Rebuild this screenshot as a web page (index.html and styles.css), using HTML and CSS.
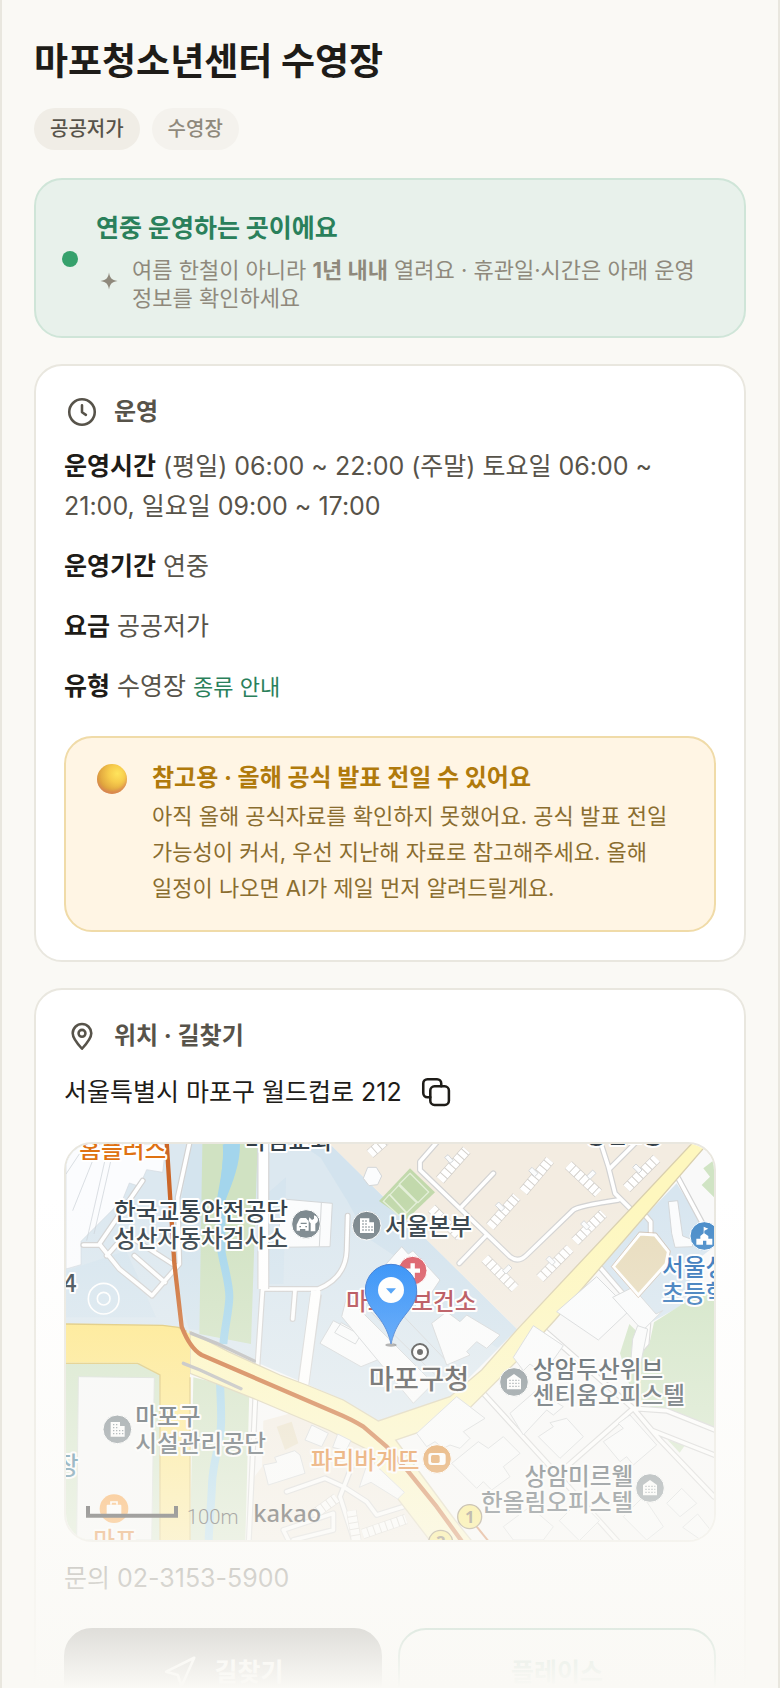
FILE: index.html
```
<!DOCTYPE html>
<html lang="ko">
<head>
	<title>마포청소년센터 수영장</title>
	<meta name="viewport" content="width=device-width, initial-scale=1">
	<meta charset="UTF-8">
	<link rel="stylesheet" href="styles.css">
</head>
<body>

<main class="page">

	<h1 class="title">마포청소년센터 수영장</h1>

	<div class="chips">
		<span class="chip chip-price">공공저가</span>
		<span class="chip">수영장</span>
	</div>

	<section class="status">
		<span class="status-dot"></span>
		<div class="status-body">
			<h2 class="status-title">연중 운영하는 곳이에요</h2>
			<div class="status-note">
				<svg class="sparkle" viewBox="0 0 26 26" aria-hidden="true"><path d="M13 4.500c1 5.500 2.500 7.500 8.500 8.500-6 1-7.500 3-8.500 8.500-1-5.500-2.500-7.500-8.500-8.500 6-1 7.500-3 8.500-8.500z"/></svg>
				<p>여름 한철이 아니라 <b>1년 내내</b> 열려요 · 휴관일·시간은 아래 운영 정보를 확인하세요</p>
			</div>
		</div>
	</section>

	<section class="card">
		<h2 class="card-title">
			<svg class="icon" viewBox="0 0 24 24" aria-hidden="true"><circle cx="12" cy="12" r="8.500"/><path d="M12 7.500v4.700l2.600 1.700"/></svg>
			운영
		</h2>
		<p class="row"><b>운영시간</b> (평일) 06:00 ~ 22:00 (주말) 토요일 06:00 ~ 21:00, 일요일 09:00 ~ 17:00</p>
		<p class="row"><b>운영기간</b> 연중</p>
		<p class="row"><b>요금</b> 공공저가</p>
		<p class="row"><b>유형</b> 수영장 <a class="guide" href="#guide">종류 안내</a></p>

		<div class="notice">
			<span class="orb"></span>
			<div class="notice-body">
				<h3 class="notice-title">참고용 · 올해 공식 발표 전일 수 있어요</h3>
				<p>아직 올해 공식자료를 확인하지 못했어요. 공식 발표 전일 가능성이 커서, 우선 지난해 자료로 참고해주세요. 올해 일정이 나오면 AI가 제일 먼저 알려드릴게요.</p>
			</div>
		</div>
	</section>

	<section class="card">
		<h2 class="card-title">
			<svg class="icon" viewBox="0 0 24 24" aria-hidden="true"><path d="M12 20.500c4-4.300 6.200-7.200 6.200-10.300a6.200 6.200 0 0 0-12.400 0c0 3.100 2.200 6 6.200 10.300z"/><circle cx="12" cy="10.200" r="2.300"/></svg>
			위치 · 길찾기
		</h2>
		<div class="address">
			<span>서울특별시 마포구 월드컵로 212</span>
			<button class="copy" type="button" aria-label="주소 복사">
				<svg class="icon" viewBox="0 0 24 24" aria-hidden="true"><rect x="8.200" y="8.200" width="12.400" height="12.400" rx="2.800"/><path d="M8.200 15.500H6.300a2.800 2.800 0 0 1-2.800-2.800V6.300a2.800 2.800 0 0 1 2.800-2.800h6.400a2.800 2.800 0 0 1 2.800 2.800v1.900"/></svg>
			</button>
		</div>

		<div class="map">
			<svg class="map-svg" viewBox="0 0 1944 1188">
				<defs>
					<linearGradient id="pin" x1="0" y1="0" x2="0" y2="1">
						<stop offset="0" stop-color="#2288f8"/>
						<stop offset="1" stop-color="#2f8efa"/>
					</linearGradient>
					<g id="office">
						<circle class="poi" r="43"/>
						<path fill="#fff" d="M-20-22H8v12h14v32h-42z"/>
						<path class="windows" d="M-13-14H4M-13-5H4M-13 4H18M-13 13H18"/>
					</g>
					<g id="home">
						<circle class="poi" r="43"/>
						<path fill="#fff" d="M0-24l21 15v31h-42V-9z"/>
						<path class="windows" d="M-14-5H16M-14 4H16M-14 13H16"/>
					</g>
				</defs>

				<!-- ground -->
				<rect width="1944" height="1188" fill="#f9f9f9"/>
				<path fill="#dce8f0" d="M0 0h792l562 556-202 202-215 73-105-63-462-200L0 545z"/>
				<path fill="#cfe1ed" d="M792 0l562 556-60 55-190-120-110-150-90-60-60-110-80-130-60-41z" opacity=".7"/>
				<path fill="#cfe1ed" d="M372 0h37v560l-40-5-30-90 8-300z" opacity=".6"/>
				<path fill="#cfe1ed" d="M592 160l68-60-8 320h-60zM0 380l180-60 90 200H0z" opacity=".5"/>
				<path fill="#fbfcfe" stroke="#d3dae0" stroke-width="2" d="M0 0h300l-10 85-48-8-22 50-30-10-20 50-125 125v70L0 375z"/>
				<path fill="none" stroke="#c8ced4" stroke-width="2" d="M128 0L62 290M146 0L84 270M60 0L0 90M100 0L20 200"/>
				<path fill="#f3ece1" d="M792 0l562 556L1896 0z"/>
				<path fill="#d0e2c2" d="M409 0h166l-20 600-155-30zM382 700l168 40-12 448H372z"/>
				<path fill="none" stroke="#a3d5ec" stroke-width="24" d="M482 0c6 60-8 110-16 160v160c8 50 25 100 24 140s-14 90-18 140M462 715c2 60 6 100 2 145s-24 100-26 160 -8 110-10 168"/>
				<path fill="#a3d5ec" d="M475 0h47c0 60-20 110-44 170l-18-10z"/>
				<path fill="#d3e5c8" d="M0 656h282v532H0z"/>
				<path fill="#f8f9f9" stroke="#d6dcd6" stroke-width="3" d="M37 698l228 3-8 487H32z"/>
				<path fill="#f3ece1" d="M592 830l110-30 210 108 195 280H548l10-180 30-40z"/>
				<path fill="#d8e6f0" d="M1832 118l-232 240 150 180 110-60 20-120 64-50v-60l-50-30z"/>
				<path fill="#d0e4c4" d="M1944 48l-32 25 20 25-25 25 37 37zM1944 420l-180 115-14 65-60-60-28 88 40 135 60 30 182 60zM1805 888l52 16-16 22z"/>

				<!-- small streets -->
				<g class="street-edge">
					<path d="M592-10v445M592 400l-24 360-20 440"/>
					<path d="M592 435h165l-47 290M757 435q82-34 85-115l3-105M687 440l-7 85"/>
					<path d="M372-10l-37 170 5 200-82 95-36-30-62-50-60-75 130-190M205 335l92 80M122 335l58-65 140 90M52 303h48"/>
					<path d="M1117-10l-55 63v25l270 260q25 20 50-5l140-135q15-12 135-30M1602-10l25 78 20 80 70 70M1632 73l80-80M1187 188l95-100M1262 273l-82 85"/>
					<path d="M1837 103l75 140M1732 208l22 25v37M1592 358l155 180-5 60-60 70M1422 548l280 245 80 95 162 170M1252 748l230 252 180 200M1702 793l-200 175M1702 793l100 7 150 60M1760 860l190 75"/>
					<path d="M662 1043l115-40 55 25 70 45 30 40 80-25M857 968l-35 90 45 140M652 1158l150-50v50l-120 30M652 1158l20 40"/>
				</g>
				<g class="street">
					<path d="M592-10v445M592 400l-24 360-20 440"/>
					<path d="M592 435h165l-47 290M757 435q82-34 85-115l3-105M687 440l-7 85"/>
					<path d="M372-10l-37 170 5 200-82 95-36-30-62-50-60-75 130-190M205 335l92 80M122 335l58-65 140 90M52 303h48"/>
					<path d="M1117-10l-55 63v25l270 260q25 20 50-5l140-135q15-12 135-30M1602-10l25 78 20 80 70 70M1632 73l80-80M1187 188l95-100M1262 273l-82 85"/>
					<path d="M1837 103l75 140M1732 208l22 25v37M1592 358l155 180-5 60-60 70M1422 548l280 245 80 95 162 170M1252 748l230 252 180 200M1702 793l-200 175M1702 793l100 7 150 60M1760 860l190 75"/>
					<path d="M662 1043l115-40 55 25 70 45 30 40 80-25M857 968l-35 90 45 140M652 1158l150-50v50l-120 30M652 1158l20 40"/>
				</g>
				<path stroke="#d5d5d5" stroke-width="36" fill="none" d="M592-10v445M750 450l-38 270"/>
				<path stroke="#fff" stroke-width="29" fill="none" d="M592-10v445M750 440l-38 285"/>

				<!-- main roads -->
				<path fill="#fef7be" stroke="#d9cfae" stroke-width="4" d="M1881-5L1354 556l-107 122-95 80-215 73-105-63-110-45-80-30-155-70-115-60v125l190 75 225 95 120 60 30 70 165 215h125l-60-75-178-240 190-64 195-194 93-102L1928-5z"/>
				<path fill="#ffe783" d="M0 540l290 4 47 6 35 20v620h-90V693l-65-37H0z"/>
				<path fill="none" stroke="#dcc268" stroke-width="4" d="M0 540l290 4 47 6 25 12M0 658h215l67 35v495M372 700v488"/>
				<path fill="none" stroke="#b5b5b5" stroke-width="10" stroke-linecap="round" d="M376 568l76 30 113 53M352 658l50 20 123 56"/>
				<path fill="none" stroke="#cb6628" stroke-width="13" stroke-linejoin="round" d="M302-5l23 363 22 190q25 65 60 85l395 170q60 25 90 45l70 60 65 75 85 105 80 110"/>
				<path fill="none" stroke="#cb6628" stroke-width="6" d="M1232 1148l34 42"/>

				<!-- buildings -->
				<g class="blocks-edge">
					<path d="M1122 108l80-90M1372 143l80-95M1272 248l80-90M1507 63l90 85M1682 133l90-90M1527 293l85-85M1422 403l90-90M1257 343l90 90M912 30l45-40M1097 193l85 85"/>
				</g>
				<g class="blocks">
					<path d="M1122 108l80-90M1372 143l80-95M1272 248l80-90M1507 63l90 85M1682 133l90-90M1527 293l85-85M1422 403l90-90M1257 343l90 90M912 30l45-40M1097 193l85 85"/>
				</g>
				<g class="building">
					<path d="M1136 40l10-8 16 18-10 8zM1388 80l10-10 18 18-10 10zM1288 184l10-10 18 18-10 10zM1562 96l18-18 10 10-18 18zM1700 70l10-10 18 18-10 10zM1544 240l10-10 18 18-10 10zM1440 346l10-10 18 18-10 10zM1310 380l18-18 10 10-18 18z"/>
					<path d="M905 70l26 0 16 26-12 26-26 3-17-22z"/>
					<path d="M650 165l149 13-7 130-160 2zM766 176l-6 132"/>
					<path d="M802 530l150 78-18 40-49 20-123-70zM826 536l60 34-18 30-62-34z"/>
					<path d="M842 458l260 260-60 60-215-260zM880 470l230 225M920 420l230 240"/>
					<path d="M1007 308l20 22 14-10 81 88-60 90-90-90-10-50z"/>
					<path d="M1097 538l45-35 40 30 20-20 100 60-40 40-30-20-30 30 10 10-70 30z"/>
					<path d="M1592 398l100 100-95 90-125-85z"/>
					<path d="M1790 500l-20 10-70-80-60 30 90 100z"/>
					<path d="M1332 808l80-70 80 50-30 25-20-15-70 75zM1417 878l45-30-10-12 50-13 50 55-70 65z"/>
					<path d="M1342 640l60-95 90 60-60 85-40-30-20 20z"/>
					<path d="M1052 868l30 40 25-15 25 20 20-10 30 10 30-30-20-20 65-40-85-65z"/>
					<path d="M1157 958l80-65 30 20 45-35 50 50-50 40 20 30-55 40-25-25-20 20z"/>
					<path d="M1612 893l60-40-15-15 35-25 80 90-70 60-20-25-20 15z"/>
					<path d="M1312 1148l80-60 70 60-30 40h-90zM1480 1130l60-60 60 60-60 60zM1672 1118l60-60 60 90-50 40zM1802 1078l45-45 45 45-50 40zM1850 1150l45-40 40 50-30 28z"/>
					<path d="M592 963l40-8-6-15 60-20 16 13 15 55-110 35zM737 843l50 25-20 40-50-20zM815 870l40 20-15 30-40-10zM880 1030l20-60 25-10 90 85-20 20-80-50z"/>
					<path d="M1700 585l15-40 30 10-20 100-30-10z"/>
					<path d="M1807 173l28-3 15 106 32 12-3 20-52 2-10-42z"/>
				</g>
				<g class="blocks-edge"><path d="M742 1112l70-50M856 1100l15 90M890 1170l130-45"/></g>
				<g class="blocks"><path d="M742 1112l70-50M856 1100l15 90M890 1170l130-45"/></g>
				<path fill="#eadfc4" d="M632 848l45-15 20 65-40 20z"/>
				<path fill="#e8dcbd" stroke="#fff" stroke-width="9" d="M1722 270l45 3 40 50-7 37-83 93-75-85z"/>
				<path fill="none" stroke="#cdb49c" stroke-width="2" d="M1720 264l51 3 42 54-8 42-88 98-81-93z"/>
				<path fill="#c2d9ac" d="M1032 73l75 72-87 83-81-57z"/>
				<path fill="none" stroke="#e4efd9" stroke-width="4" d="M1032 88l56 56-32 32-56-56zM998 124l54 52-30 30-50-54zM970 152l50 54-22 8-46-42z"/>
				<g fill="none" stroke="#fff" stroke-width="5"><circle cx="113" cy="464" r="46"/><circle cx="113" cy="464" r="19"/></g>

				<!-- place markers -->
				<use href="#office" x="902" y="245"/>
				<use href="#office" x="154" y="856"/>
				<use href="#home" x="1344" y="714"/>
				<use href="#home" x="1752" y="1032"/>
				<g transform="translate(720 240)">
					<circle class="poi" r="43"/>
					<path fill="#fff" d="M-28 20V2l8-16q2-4 6-4H0q4 6 8 8V20H-2v-5h-16v5zM14 22V-2q-8-6-4-18l8 8 6-4v-10q12 4 12 14 0 8-8 11v23z"/>
					<path stroke="#7a868c" stroke-width="4" d="M-16-2H2M-20 8h5M-2 8h5"/>
				</g>
				<g transform="translate(1040 380)"><circle r="43" fill="#da5560" stroke="#fff" stroke-width="3"/><path stroke="#fff" stroke-width="13" d="M0-22V22M-22 0H22"/></g>
				<g transform="translate(1915 276)"><circle r="43" fill="#4489c8" stroke="#fff" stroke-width="3"/><path fill="#fff" d="M-2-28l14 6-12 6v8l12 8v8h12v18H6V14h-10v12h-20V8h12V0L-2-8z"/></g>
				<g transform="translate(1113 945)"><circle r="43" fill="#dc8428" stroke="#fff" stroke-width="3"/><rect x="-26" y="-18" width="52" height="36" rx="9" fill="#fff"/><rect x="-18" y="-12" width="26" height="24" rx="5" fill="#dc8428"/></g>
				<g transform="translate(144 1094)"><circle r="43" fill="#fb962a"/><rect x="-22" y="-12" width="44" height="32" rx="3" fill="#fff"/><path fill="none" stroke="#fff" stroke-width="5" d="M-9-12v-8H9v8"/></g>
				<g fill="#fff" stroke="#333" stroke-width="6"><circle cx="1062" cy="624" r="24"/><circle cx="1062" cy="624" r="6" fill="#333"/></g>

				<!-- labels -->
				<g class="label">
					<text x="144" y="229">한국교통안전공단</text>
					<text x="144" y="308">성산자동차검사소</text>
					<text x="957" y="274">서울본부</text>
					<text x="1400" y="702">상암두산위브</text>
					<text x="1400" y="781">센티움오피스텔</text>
					<text x="1702" y="1022" text-anchor="end">상암미르웰</text>
					<text x="1702" y="1101" text-anchor="end">한올림오피스텔</text>
					<text x="208" y="844">마포구</text>
					<text x="208" y="923">시설관리공단</text>
					<text x="537" y="14">마림교회</text>
					<text x="1557" y="-2">상암2동</text>
					<text x="-8" y="445">4</text>
					<text class="label-red" x="840" y="497">마포구보건소</text>
					<text class="label-blue" x="1788" y="395">서울성</text>
					<text class="label-blue" x="1788" y="474">초등학교</text>
					<text class="label-teal" x="-28" y="989">장</text>
					<text class="label-orange" x="734" y="974">파리바게뜨</text>
					<text class="label-orange" x="40" y="42">홈플러스</text>
					<text class="label-orange" x="82" y="1215">마포</text>
					<text class="label-hall" x="908" y="736">마포구청</text>
				</g>
				<g class="exit">
					<circle cx="1211" cy="1118" r="36"/><text x="1211" y="1136">1</text>
					<circle cx="1124" cy="1195" r="36"/><text x="1124" y="1213">2</text>
				</g>

				<!-- scale and logo -->
				<path fill="none" stroke="#000" stroke-width="12" d="M66 1086v29h264v-29"/>
				<text class="scale" x="362" y="1139">100m</text>
				<text class="kakao" x="562" y="1133">kakao</text>

				<ellipse cx="975" cy="603" rx="17" ry="5" fill="#555" opacity=".6"/>
				<path fill="url(#pin)" stroke="#2a6fd0" stroke-width="3" d="M975 600c-10-45-27-68-48-94-20-25-29-43-29-68a77 77 0 0 1 154 0c0 25-9 43-29 68-21 26-38 49-48 94z"/>
				<circle cx="975" cy="438" r="39" fill="#fff"/>
				<path fill="#3393f8" d="M960 433h30l-15 16z"/>
			</svg>
		</div>

		<p class="contact">문의 02-3153-5900</p>

		<div class="actions">
			<button class="btn btn-dark" type="button">
				<svg class="icon" viewBox="0 0 24 24" aria-hidden="true"><path d="M21.500 2.500L2.800 11.800l7.700 2.200 2.500 7.500z"/></svg>
				길찾기
			</button>
			<button class="btn" type="button">플레이스</button>
		</div>
	</section>

	<div class="fade"></div>

</main>

</body>
</html>
```

FILE: styles.css
```
* {
	box-sizing: border-box;
	margin: 0;
	padding: 0;
}

body {
	font-family: Inter, "Noto Sans CJK KR", sans-serif;
	font-size: 25px;
	line-height: 40px;
	color: #57534a;
	background: #faf9f5;
	word-break: keep-all;
}

button {
	font: inherit;
	cursor: pointer;
}

.page {
	position: relative;
	height: 100vh;
	overflow: hidden;
	padding: 38px 32px 0;
	border-left: 2px solid #e9e7df;
	border-right: 2px solid #e9e7df;
}

.title {
	font-size: 37px;
	line-height: 48px;
	color: #1e1c18;
}

.chips {
	display: flex;
	gap: 12px;
	margin-top: 22px;
}

.chip {
	padding: 0 16px;
	border-radius: 21px;
	font-size: 20px;
	line-height: 42px;
	font-weight: 500;
	color: #8f897c;
	background: #f4f2ed;
}

.chip-price {
	color: #57534a;
	background: #f0ede6;
}

/* status banner */
.status {
	display: flex;
	align-items: center;
	gap: 18px;
	margin-top: 28px;
	padding: 26px 26px 24px;
	border: 2px solid #cfe5d8;
	border-radius: 28px;
	background: #e8f1eb;
}

.status-dot {
	flex: none;
	width: 16px;
	height: 16px;
	border-radius: 50%;
	background: #36a16c;
}

.status-title {
	font-size: 25px;
	line-height: 44px;
	color: #2a805b;
}

.status-note {
	display: flex;
	gap: 10px;
	margin-top: 6px;
	font-size: 22px;
	line-height: 28px;
	color: #8f897c;
}

.sparkle {
	flex: none;
	width: 26px;
	height: 26px;
	margin-top: 12px;
	fill: #8f897c;
}

/* cards */
.card {
	margin-top: 26px;
	padding: 28px;
	border: 2px solid #e9e7df;
	border-radius: 28px;
	background: #fff;
}

.card-title {
	display: flex;
	align-items: center;
	gap: 14px;
	margin-bottom: 16px;
	font-size: 24px;
	line-height: 36px;
}

.icon {
	flex: none;
	width: 36px;
	height: 36px;
	fill: none;
	stroke: currentColor;
	stroke-width: 1.7;
	stroke-linecap: round;
	stroke-linejoin: round;
}

.row {
	margin-bottom: 20px;
}

.row b {
	color: #1e1c18;
}

.guide {
	font-size: 22px;
	line-height: 1;
	color: #2a805b;
	text-decoration: none;
}

.notice {
	display: flex;
	gap: 20px;
	margin-top: 30px;
	padding: 22px 26px 24px;
	border: 2px solid #f0dba8;
	border-radius: 28px;
	font-size: 22px;
	line-height: 36px;
	color: #8a6d2f;
	background: #fff5e4;
}

.orb {
	flex: none;
	width: 30px;
	height: 30px;
	margin: 4px 5px;
	border-radius: 50%;
	background: radial-gradient(circle at 68% 32%, #ffe45c 0, #f7cc4c 30%, #dfa33e 65%, #cf8f48 100%);
	box-shadow: inset 0 -3px 3px rgba(214, 110, 100, .5);
}

.notice-title {
	margin-bottom: 2px;
	font-size: 24px;
	line-height: 36px;
	color: #b07a0c;
}

.address {
	display: flex;
	align-items: center;
	gap: 12px;
	color: #1e1c18;
}

.copy {
	display: flex;
	align-items: center;
	justify-content: center;
	width: 44px;
	height: 44px;
	border: 0;
	color: #1e1c18;
	background: none;
}

/* map */
.map {
	margin-top: 28px;
	border: 2px solid #e9e7df;
	border-radius: 28px;
	overflow: hidden;
}

.map-svg {
	display: block;
	width: 100%;
}

.street-edge,
.street {
	fill: none;
	stroke: #d2d2d2;
	stroke-width: 18;
	stroke-linecap: round;
	stroke-linejoin: round;
}

.street {
	stroke: #fff;
	stroke-width: 11;
}

.blocks-edge {
	stroke: #d2cfca;
	stroke-width: 31;
}

.blocks {
	stroke: #fff;
	stroke-width: 27;
	stroke-dasharray: 16 3;
}

.building {
	fill: #fbfcfd;
	stroke: #d3d6d8;
	stroke-width: 3;
}

.poi {
	fill: #7a868c;
	stroke: #fff;
	stroke-width: 3;
}

.windows {
	stroke: #7a868c;
	stroke-width: 4;
	stroke-dasharray: 4 5;
}

.label {
	font-family: "Noto Sans CJK KR", sans-serif;
	font-size: 71px;
	font-weight: 500;
	fill: #333f48;
	stroke: #fff;
	stroke-width: 12px;
	stroke-linejoin: round;
	paint-order: stroke;
}

.label-red {
	fill: #ae3a44;
}

.label-blue {
	fill: #2b70b8;
}

.label-teal {
	fill: #2f6f8e;
}

.label-orange {
	fill: #df7212;
}

.label-hall {
	font-size: 82px;
	fill: #333;
}

.exit circle {
	fill: #fbe75c;
	stroke: #7c6a45;
	stroke-width: 4;
}

.exit text {
	font-family: "Noto Sans", sans-serif;
	font-size: 50px;
	font-weight: 700;
	text-anchor: middle;
	fill: #5a4c32;
}

.scale {
	font-family: Roboto, sans-serif;
	font-size: 61px;
	font-weight: 300;
	fill: #111;
}

.kakao {
	font-family: "Noto Sans", sans-serif;
	font-size: 71px;
	font-weight: 500;
	fill: #000;
}

.contact {
	margin-top: 16px;
}

.actions {
	display: grid;
	grid-template-columns: 1fr 1fr;
	gap: 16px;
	margin-top: 30px;
}

.btn {
	display: flex;
	align-items: center;
	justify-content: center;
	gap: 16px;
	min-height: 88px;
	border: 2px solid #2a805b;
	border-radius: 28px;
	font-size: 25px;
	font-weight: 700;
	color: #2a805b;
	background: #fff;
}

.btn-dark {
	border-color: #1e1c18;
	color: #fff;
	background: #1e1c18;
}

.fade {
	position: absolute;
	left: -2px;
	right: -2px;
	bottom: 0;
	height: 29vh;
	background: linear-gradient(rgba(250, 249, 245, 0), #faf9f5);
	pointer-events: none;
}
```
